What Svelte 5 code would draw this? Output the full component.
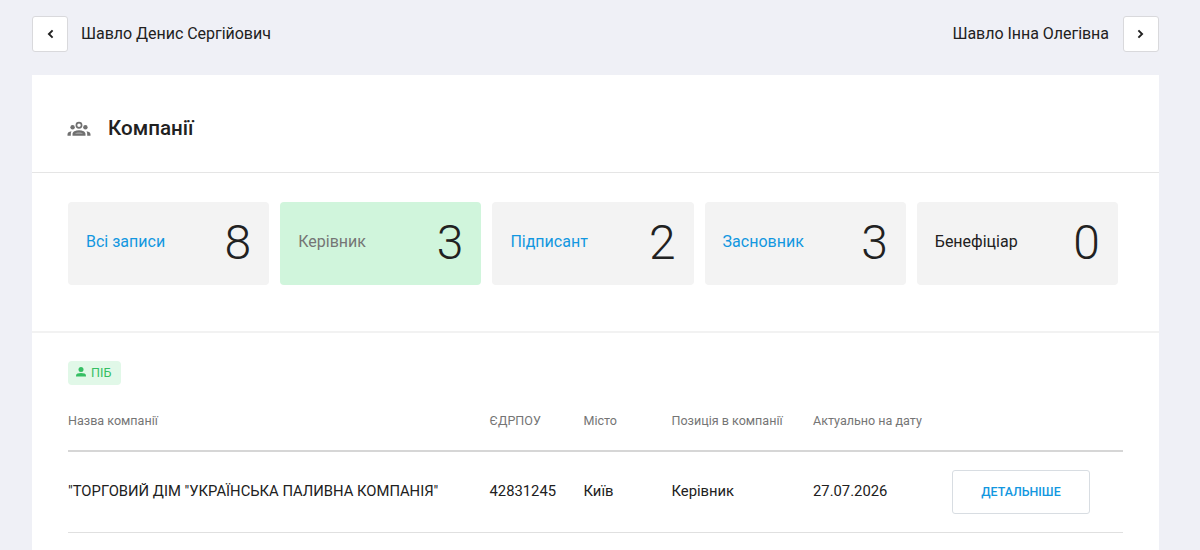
<script>
  const roles = [
    { label: 'Всі записи', count: 8 },
    { label: 'Керівник', count: 3, active: true },
    { label: 'Підписант', count: 2 },
    { label: 'Засновник', count: 3 },
    { label: 'Бенефіціар', count: 0 }
  ];

  const companies = [
    {
      name: '"ТОРГОВИЙ ДІМ "УКРАЇНСЬКА ПАЛИВНА КОМПАНІЯ"',
      code: '42831245',
      city: 'Київ',
      position: 'Керівник',
      date: '27.07.2026'
    }
  ];
</script>

<div class="page">
  <nav class="pager">
    <div class="person">
      <button class="arrow" aria-label="Назад">
        <svg width="8" height="10" viewBox="0 0 8 10"><path d="M6.6 1.3 2.9 5l3.7 3.7" /></svg>
      </button>
      <span>Шавло Денис Сергійович</span>
    </div>
    <div class="person next">
      <span>Шавло Інна Олегівна</span>
      <button class="arrow" aria-label="Вперед">
        <svg width="8" height="10" viewBox="0 0 8 10"><path d="M1.4 1.3 5.1 5 1.4 8.7" /></svg>
      </button>
    </div>
  </nav>

  <main class="card">
    <header class="card-header">
      <svg class="groups" width="24" height="16" viewBox="0 0 24 16">
        <circle cx="12" cy="4.3" r="2.6" fill="none" stroke="currentColor" stroke-width="1.7" />
        <circle cx="5.6" cy="6.2" r="2.2" />
        <circle cx="18.4" cy="6.2" r="2.2" />
        <path d="M5.5 14.8v-1.7c0-1.3.7-2.4 1.8-2.9 1.3-.6 3-1 4.7-1s3.4.4 4.7 1c1.1.5 1.8 1.6 1.8 2.9v1.7z" />
        <path d="M.5 14.8v-1.5c0-1.5 1.3-2.6 4-3-.5.8-.7 1.6-.7 2.6v1.9zM23.5 14.8v-1.5c0-1.5-1.3-2.6-4-3 .5.8.7 1.6.7 2.6v1.9z" />
        <path d="M8 12.8c.6-.9 2.4-1.2 4-1.2s3.4.3 4 1.2z" fill="#a8a8a8" />
      </svg>
      <h2>Компанії</h2>
    </header>

    <section class="roles">
      {#each roles as role}
        <div class="role" class:active={role.active} class:empty={role.count === 0}>
          <span class="label">{role.label}</span>
          <span class="count">{role.count}</span>
        </div>
      {/each}
    </section>

    <section class="list">
      <span class="tag">
        <svg width="10" height="10" viewBox="0 0 10 10">
          <circle cx="5" cy="2.5" r="2.5" />
          <path d="M0 9.5V8.4C0 6.8 2.4 6 5 6s5 .8 5 2.4v1.1z" />
        </svg>
        ПІБ
      </span>

      <div class="row head">
        <span>Назва компанії</span>
        <span>ЄДРПОУ</span>
        <span>Місто</span>
        <span>Позиція в компанії</span>
        <span>Актуально на дату</span>
      </div>
      {#each companies as company}
        <div class="row">
          <span>{company.name}</span>
          <span>{company.code}</span>
          <span>{company.city}</span>
          <span>{company.position}</span>
          <span>{company.date}</span>
          <button class="details">Детальніше</button>
        </div>
      {/each}
    </section>
  </main>
</div>

<style>
:global(body) {
  margin: 0;
  background: #eff0f6;
}

.page {
  box-sizing: border-box;
  height: 550px;
  overflow: hidden;
  padding: 16px 41px 0 32px;
  font-family: Roboto, sans-serif;
  color: #212121;
}

button {
  font-family: inherit;
  padding: 0;
  background: #fff;
}

.pager {
  display: flex;
  justify-content: space-between;
  height: 36px;
  margin-bottom: 23px;
}

.person {
  display: flex;
  align-items: center;
  gap: 13px;
  font-size: 16px;
  line-height: 34px;
  letter-spacing: -0.03px;
}

.next {
  gap: 14px;
}

.arrow {
  box-sizing: border-box;
  display: flex;
  align-items: center;
  justify-content: center;
  width: 36px;
  height: 36px;
  border: 1px solid #d9d9dc;
  border-radius: 3px;
}

.arrow path {
  fill: none;
  stroke: #212121;
  stroke-width: 1.9;
}

.card {
  height: 500px;
  background: #fff;
}

.card-header {
  display: flex;
  align-items: center;
  gap: 17px;
  height: 97px;
  padding: 0 35px;
  border-bottom: 1px solid #e5e5e5;
}

.groups {
  margin-top: 10px;
  color: #707070;
  fill: currentColor;
}

h2 {
  margin: 9px 0 0;
  font-size: 20.6px;
  font-weight: 500;
  line-height: 28px;
}

.roles {
  box-sizing: border-box;
  display: grid;
  grid-template-columns: repeat(5, 1fr);
  gap: 11px;
  height: 160px;
  padding: 29px 41px 47px 36px;
  border-bottom: 2px solid #f2f2f2;
}

.role {
  box-sizing: border-box;
  display: flex;
  align-items: center;
  justify-content: space-between;
  height: 83px;
  padding: 0 18px;
  border-radius: 4px;
  background: #f3f3f3;
}

.label {
  margin-top: -5px;
  font-size: 16px;
  color: #1297e0;
}

.count {
  font-size: 48px;
  font-weight: 300;
  line-height: 56px;
  margin-top: -2px;
}

.active {
  background: #d0f5dc;
}

.active .label {
  color: #757575;
}

.empty .label {
  color: #212121;
}

.list {
  padding: 28px 36px 0;
}

.tag {
  display: flex;
  align-items: center;
  gap: 5px;
  box-sizing: border-box;
  width: 53px;
  height: 24px;
  padding: 0 0 2px 8px;
  border-radius: 4px;
  background: #e1f8e8;
  color: #35bf63;
  font-size: 12.6px;
}

.tag svg {
  fill: currentColor;
}

.row {
  box-sizing: border-box;
  display: grid;
  grid-template-columns: 421.5px 94px 88px 141.5px 139px 138px;
  align-items: center;
  height: 81px;
  border-bottom: 1px solid #e0e0e0;
  font-size: 14.8px;
  white-space: nowrap;
}

.row span {
  margin-top: -3px;
}

.row.head {
  height: 67px;
  border-bottom: 2px solid #d6d6d6;
  color: #757575;
  font-size: 12.55px;
}

.head span {
  margin-top: 6px;
}

.details {
  box-sizing: border-box;
  height: 44px;
  padding-bottom: 2px;
  border: 1px solid #d8dde2;
  border-radius: 3px;
  color: #1297e0;
  font-size: 12.4px;
  font-weight: 500;
  text-transform: uppercase;
}
</style>
